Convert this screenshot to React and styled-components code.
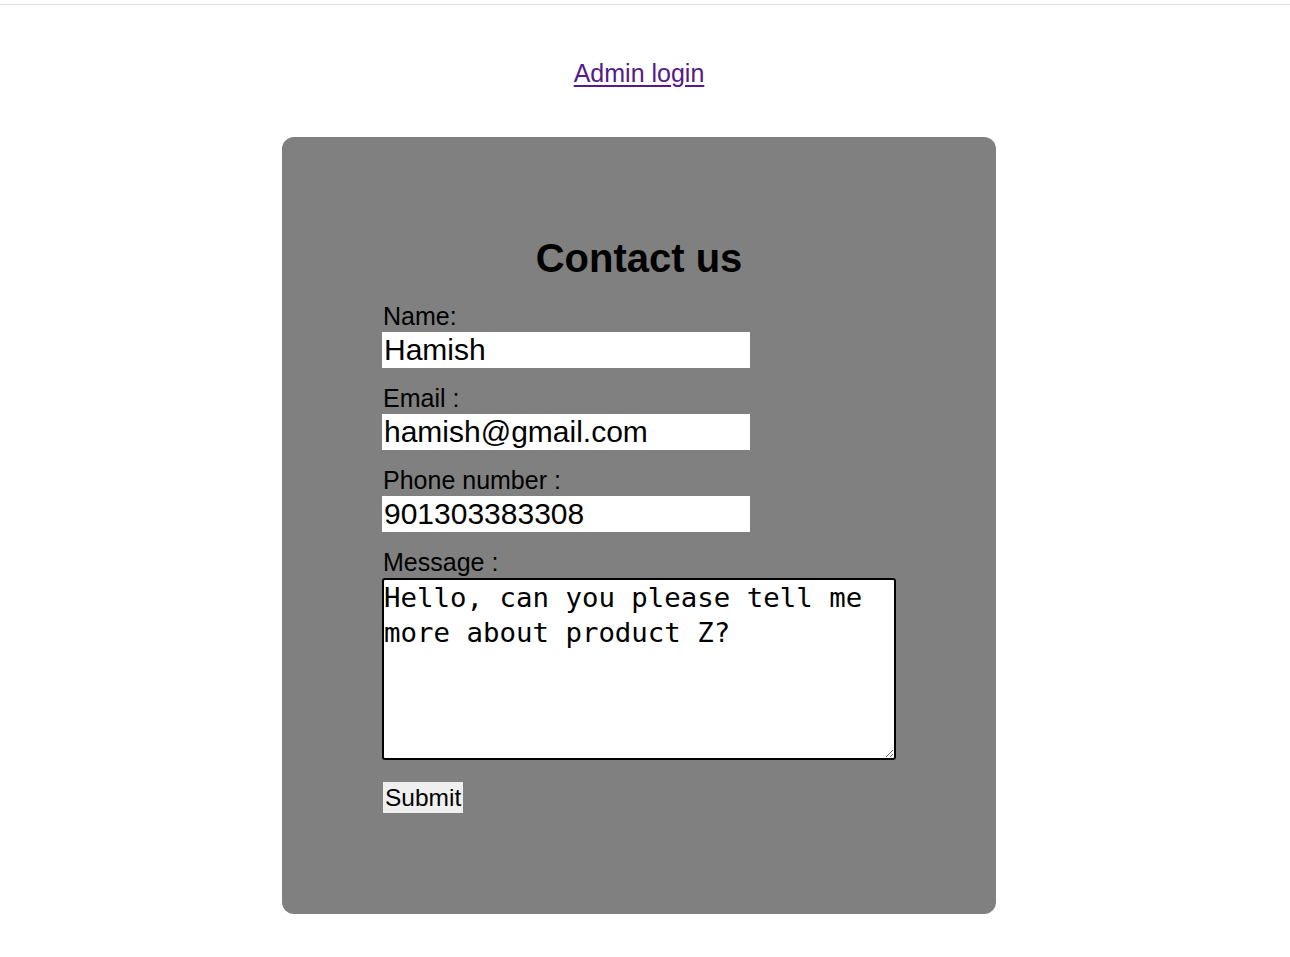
import React from "react";
import styled, { createGlobalStyle } from "styled-components";

const Global = createGlobalStyle`
  html, body { margin: 0; padding: 0; background: #fff; }
  body { font-family: "Liberation Sans", Arial, sans-serif; color: #000; }
  * { box-sizing: border-box; }
`;

const TopBar = styled.div`
  height: 5px;
  border-bottom: 1px solid #dedede;
`;

const Page = styled.main`
  padding-right: 12px;
`;

const LinkRow = styled.div`
  margin-top: 54px;
  text-align: center;
  font-size: 25px;
  line-height: 28px;
`;

const AdminLink = styled.a`
  color: #551a8b;
  text-decoration: underline;
  text-underline-offset: 3px;
`;

const Card = styled.section`
  width: 714px;
  margin: 50px auto 0;
  background: #808080;
  border-radius: 12px;
  padding: 98px 100px 101px;
`;

const Title = styled.h1`
  margin: 0 0 23px;
  text-align: center;
  font-size: 40px;
  line-height: 46px;
  font-weight: 700;
`;

const Form = styled.form`
  display: flex;
  flex-direction: column;
  align-items: flex-start;
`;

const Field = styled.div`
  display: flex;
  flex-direction: column;
  align-items: flex-start;
  margin-bottom: ${(p) => p.$gap}px;
`;

const Label = styled.label`
  font-size: 25px;
  line-height: 25px;
  padding: 0 0 3px 1px;
`;

const Input = styled.input`
  width: 368px;
  height: 36px;
  border: none;
  outline: none;
  background: #fff;
  padding: 0 2px;
  font-family: "Liberation Sans", Arial, sans-serif;
  font-size: 30px;
  color: #000;
`;

const TextArea = styled.textarea`
  width: 514px;
  height: 182px;
  border: 2px solid #000;
  border-radius: 3px;
  background: #fff;
  padding: 0;
  outline: none;
  font-family: "DejaVu Sans Mono", monospace;
  font-size: 27.4px;
  line-height: 35px;
  color: #000;
  resize: both;
`;

const Submit = styled.button`
  height: 31px;
  padding: 0 2px;
  margin-left: 1px;
  border: none;
  background: #efefef;
  font-family: "Liberation Sans", Arial, sans-serif;
  font-size: 24.5px;
  color: #000;
`;

export default function App() {
  return (
    <>
      <Global />
      <TopBar />
      <Page>
        <LinkRow>
          <AdminLink href="#">Admin login</AdminLink>
        </LinkRow>
        <Card>
          <Title>Contact us</Title>
          <Form onSubmit={(e) => e.preventDefault()}>
            <Field $gap={18}>
              <Label>Name:</Label>
              <Input defaultValue="Hamish" />
            </Field>
            <Field $gap={18}>
              <Label>Email :</Label>
              <Input defaultValue="hamish@gmail.com" />
            </Field>
            <Field $gap={18}>
              <Label>Phone number :</Label>
              <Input defaultValue="901303383308" />
            </Field>
            <Field $gap={22}>
              <Label>Message :</Label>
              <TextArea defaultValue="Hello, can you please tell me more about product Z?" />
            </Field>
            <Submit type="submit">Submit</Submit>
          </Form>
        </Card>
      </Page>
    </>
  );
}
